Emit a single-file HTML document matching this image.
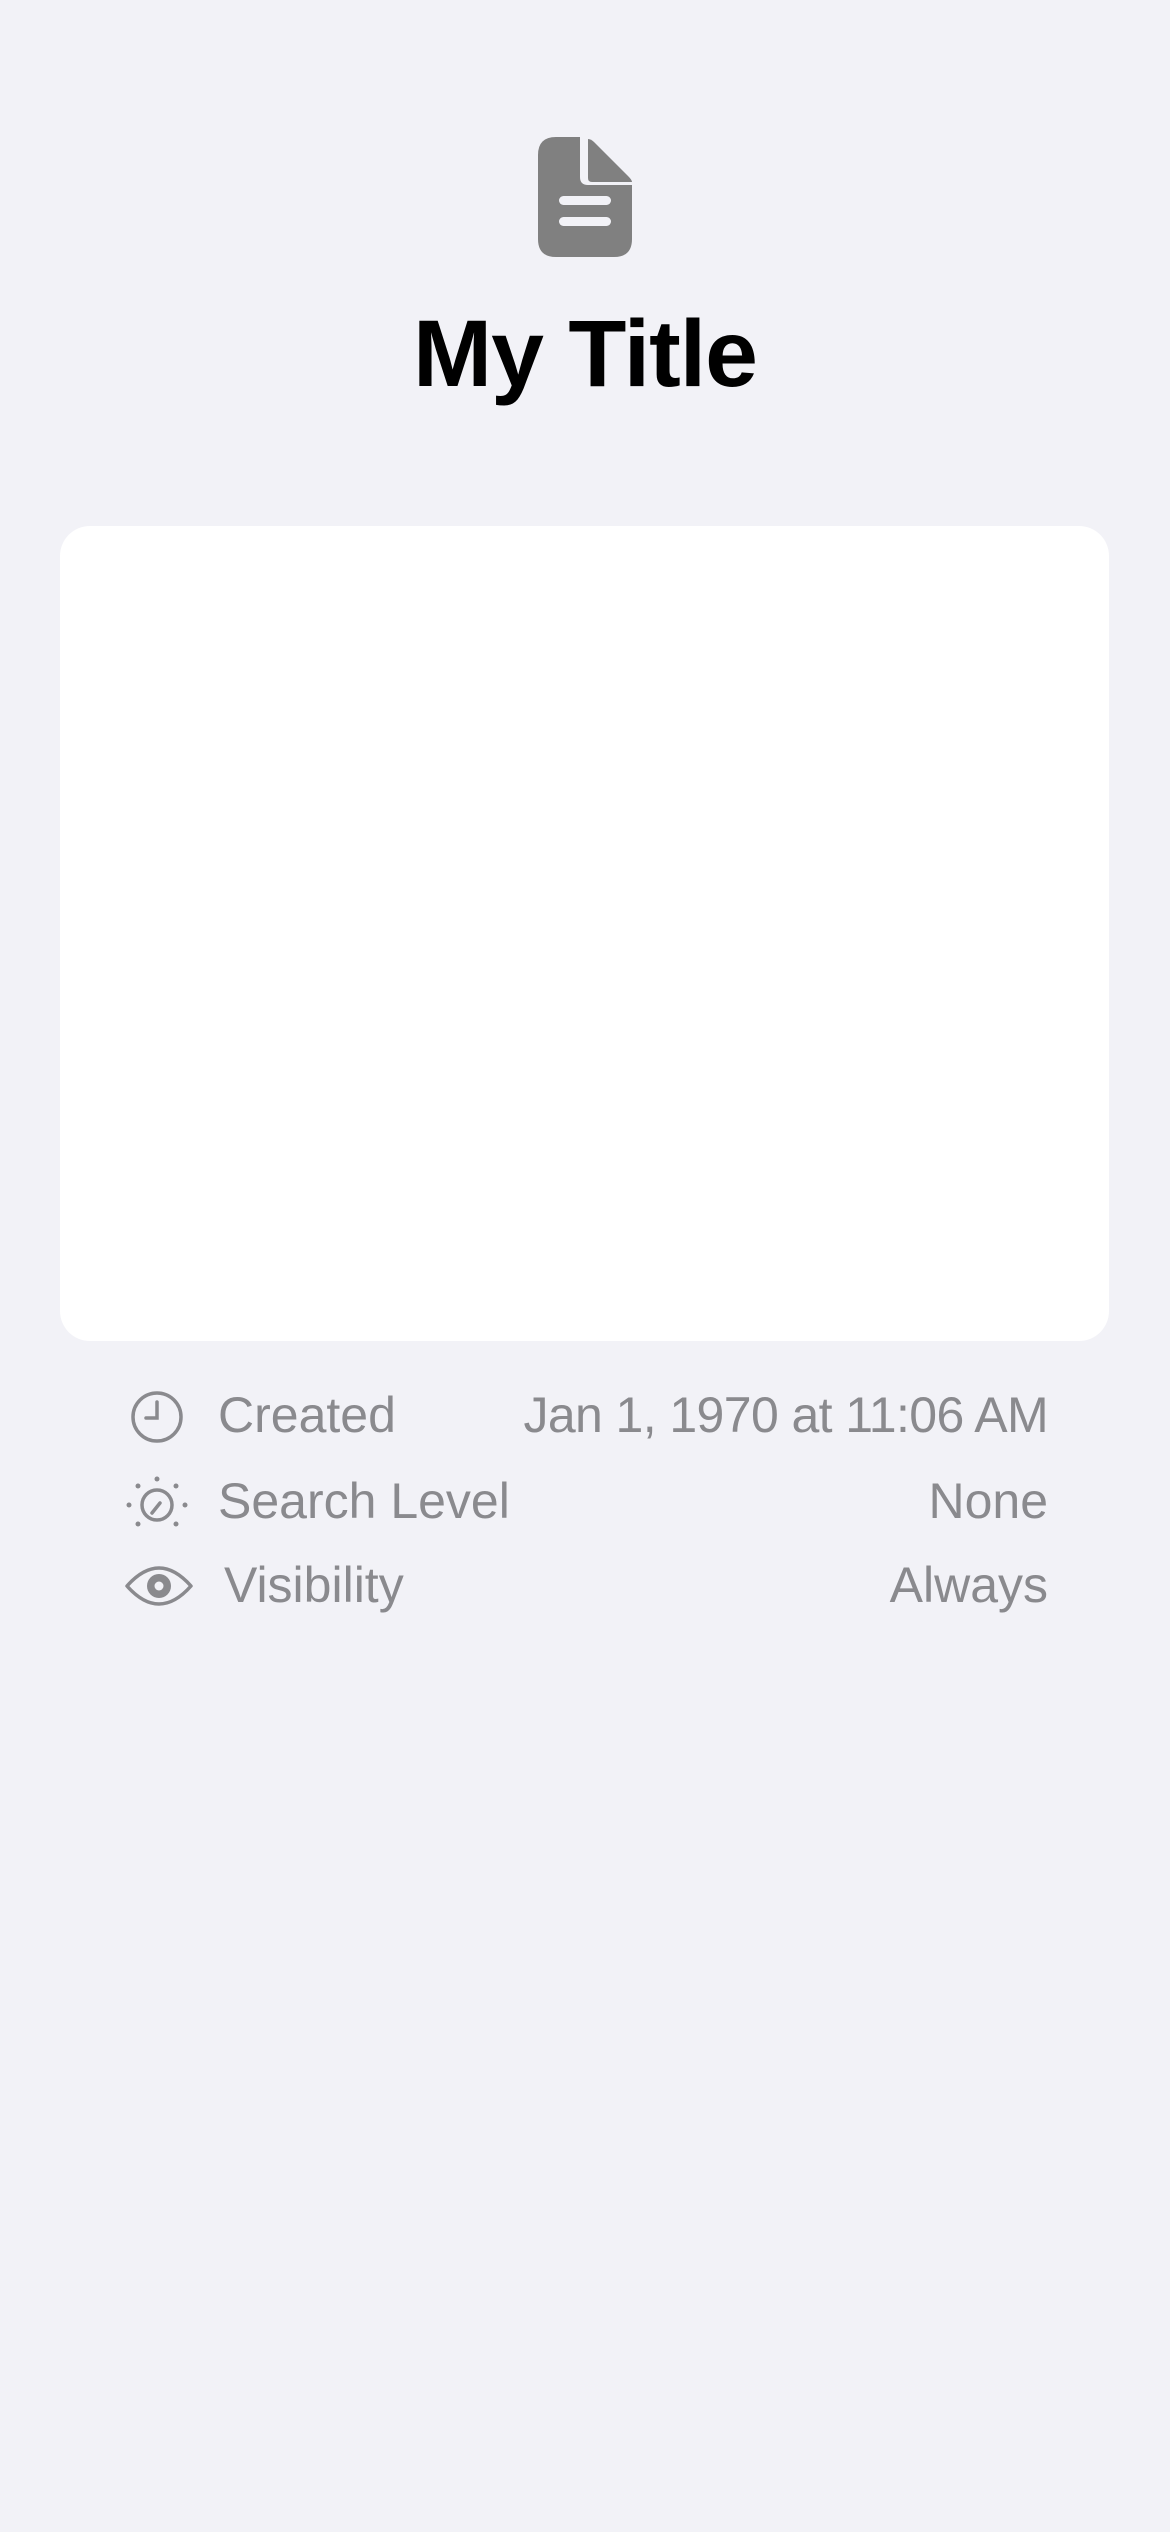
<!DOCTYPE html>
<html><head><meta charset="utf-8"><style>
html,body{margin:0;padding:0;}
body{width:1170px;height:2532px;background:#f2f2f7;position:relative;overflow:hidden;font-family:"Liberation Sans",sans-serif;}
.title{position:absolute;left:0;width:1170px;top:299px;text-align:center;font-weight:bold;font-size:95px;line-height:110px;color:#000;letter-spacing:-1px;}
.card{position:absolute;left:60px;top:526px;width:1049px;height:815px;background:#fff;border-radius:30px;}
.row{position:absolute;left:0;width:1170px;height:60px;font-size:50px;color:#8a8a8e;line-height:60px;}
.row .l{position:absolute;left:218px;top:0;}
.row .r{position:absolute;right:122px;top:0;}
svg{position:absolute;}
</style></head><body>
<svg style="left:538px;top:137px" width="94" height="120" viewBox="0 0 94 120">
<path d="M18 0 H42 V40 Q42 48 50 48 H94 V102 Q94 120 76 120 H18 Q0 120 0 102 V18 Q0 0 18 0 Z" fill="#808080"/>
<path d="M50 2 Q53 2 56 5 L90 39 Q94 43 94 45 H54 Q50 45 50 41 Z" fill="#808080"/>
<rect x="21" y="59" width="52" height="9" rx="4.5" fill="#f2f2f7"/>
<rect x="21" y="80" width="52" height="9" rx="4.5" fill="#f2f2f7"/>
</svg>
<div class="title">My Title</div>
<div class="card"></div>

<svg style="left:129px;top:1389px" width="56" height="56" viewBox="0 0 56 56">
<circle cx="28" cy="28" r="24" fill="none" stroke="#8a8a8e" stroke-width="3.5"/>
<path d="M28 13 V29 H17" fill="none" stroke="#8a8a8e" stroke-width="3.5" stroke-linecap="round"/>
</svg>
<div class="row" style="top:1385px"><span class="l">Created</span><span class="r" style="letter-spacing:-0.6px">Jan 1, 1970 at 11:06 AM</span></div>

<svg style="left:125px;top:1475px" width="64" height="56" viewBox="0 0 64 56">
<circle cx="32" cy="30" r="15" fill="none" stroke="#8a8a8e" stroke-width="3.5"/>
<path d="M35 28 L27 38" stroke="#8a8a8e" stroke-width="3.5" stroke-linecap="round"/>
<g fill="#8a8a8e"><circle cx="32" cy="4" r="2.5"/><circle cx="13" cy="11" r="2.5"/><circle cx="51" cy="11" r="2.5"/><circle cx="4" cy="30" r="2.5"/><circle cx="60" cy="30" r="2.5"/><circle cx="13" cy="49" r="2.5"/><circle cx="51" cy="49" r="2.5"/></g>
</svg>
<div class="row" style="top:1471px"><span class="l">Search Level</span><span class="r">None</span></div>

<svg style="left:124px;top:1562px" width="70" height="48" viewBox="0 0 70 48">
<path d="M3 24 Q35 -12 67 24 Q35 60 3 24 Z" fill="none" stroke="#8a8a8e" stroke-width="3.5" stroke-linejoin="round"/>
<circle cx="35" cy="24" r="12" fill="#8a8a8e"/>
<circle cx="35" cy="24" r="4.5" fill="#f2f2f7"/>
</svg>
<div class="row" style="top:1555px"><span class="l" style="left:224px">Visibility</span><span class="r">Always</span></div>
</body></html>
